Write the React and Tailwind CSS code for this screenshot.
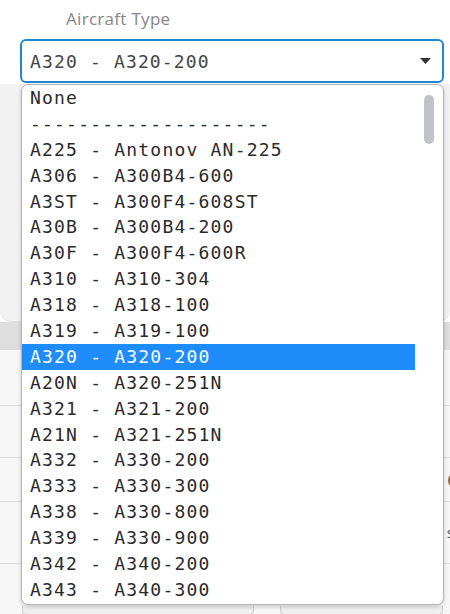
import React from 'react';

const options = [
  'None',
  '--------------------',
  'A225 - Antonov AN-225',
  'A306 - A300B4-600',
  'A3ST - A300F4-608ST',
  'A30B - A300B4-200',
  'A30F - A300F4-600R',
  'A310 - A310-304',
  'A318 - A318-100',
  'A319 - A319-100',
  'A320 - A320-200',
  'A20N - A320-251N',
  'A321 - A321-200',
  'A21N - A321-251N',
  'A332 - A330-200',
  'A333 - A330-300',
  'A338 - A330-800',
  'A339 - A330-900',
  'A342 - A340-200',
  'A343 - A340-300',
];

const selected = 'A320 - A320-200';

export default function App() {
  return (
    <div className="relative w-[450px] h-[614px] overflow-hidden bg-white">
      {/* Field label */}
      <div className="pt-[8px] pl-[66px] text-[17px] leading-[22px] tracking-[0.3px] text-[#868686] font-['Open_Sans',sans-serif]">
        Aircraft Type
      </div>

      {/* Select box */}
      <div className="ml-[20px] mt-[9px] w-[424px] h-[44px] flex items-center justify-between rounded-[6px] border-2 border-[#1f88d2] bg-white pl-[8px] pr-[11px]">
        <span className="font-['DejaVu_Sans_Mono',monospace] text-[18px] tracking-[1.15px] text-[#444] whitespace-pre">
          {selected}
        </span>
        <svg width="11" height="6" viewBox="0 0 11 6">
          <path d="M0 0 L11 0 L5.5 6 Z" fill="#333" />
        </svg>
      </div>

      {/* Page content behind the open list */}
      <div className="mt-px h-[238px] bg-[#f2f2f2] rounded-b-[12px] border-b border-[#e0e0e0]" />
      <div className="h-[28px] bg-[#dedede]" />
      <div className="bg-[#f7f7f7]">
        <div className="h-[56px] border-b border-[#dddddd]" />
        <div className="h-[52px] border-b border-[#dddddd]" />
        <div className="h-[44px] border-b border-[#dddddd] flex items-center justify-end">
          <span className="text-[17px] text-[#555] font-['Open_Sans',sans-serif] -mr-[7px]">6</span>
        </div>
        <div className="h-[62px] border-b border-[#dddddd] flex items-center justify-end">
          <span className="text-[15px] text-[#555] font-['Open_Sans',sans-serif] -mr-[4px]">s</span>
        </div>
        <div className="h-[42px]" />
        <div className="flex gap-[26px] pl-[22px] pr-[7px]">
          <div className="w-[232px] h-[10px] rounded-b-[6px] border border-t-0 border-[#c9c9c9] bg-[#f0f0f0]" />
          <div className="flex-1 h-[10px] rounded-b-[6px] border border-t-0 border-[#c9c9c9] bg-[#f0f0f0]" />
        </div>
      </div>

      {/* Open option list */}
      <div className="absolute left-[21px] top-[84px] w-[423px] h-[521px] rounded-[7px] border border-[#b5b5b5] bg-white shadow-[0_2px_4px_rgba(0,0,0,0.18)] overflow-hidden flex">
        <ul className="flex-1 pr-[28px] font-['DejaVu_Sans_Mono',monospace] text-[18px] tracking-[1.2px] text-[#2a2a2a]">
          {options.map((opt) => (
            <li
              key={opt}
              className={`h-[25.9px] leading-[25.9px] pl-[8px] whitespace-pre ${
                opt === selected ? 'bg-[#1e8cfa] text-white' : ''
              }`}
            >
              {opt}
            </li>
          ))}
        </ul>
        <div className="absolute right-[9px] top-[10px] w-[10px] h-[49px] rounded-full bg-[#c2c3ca]" />
      </div>
    </div>
  );
}
